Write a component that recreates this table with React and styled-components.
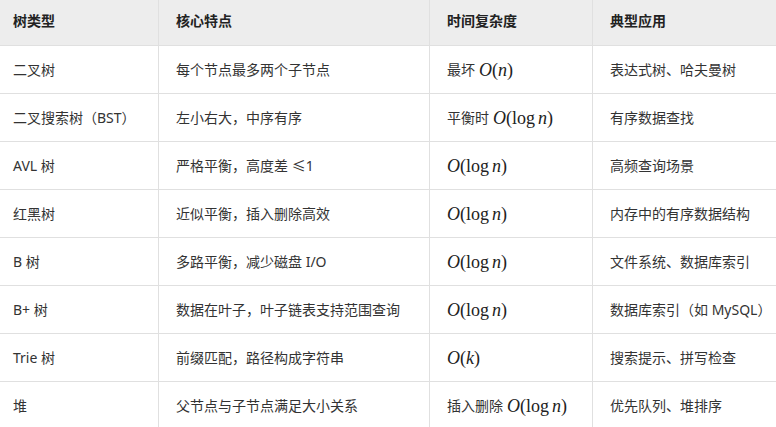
import React from "react";
import styled, { createGlobalStyle } from "styled-components";

const Global = createGlobalStyle`
  html, body { margin: 0; padding: 0; background: #fff; }
  body {
    font-family: "Noto Sans", "Noto Sans CJK SC", sans-serif;
    color: #333;
    overflow: hidden;
  }
`;

const Table = styled.div`
  width: 776px;
  display: flex;
  flex-direction: column;
  font-size: 14px;
`;

const Row = styled.div`
  display: grid;
  grid-template-columns: 159px 271px 163px 1fr;
  height: ${(p) => (p.$head ? "46px" : "48px")};
  box-sizing: border-box;
  border-bottom: 1px solid #e0e0e0;
  background: ${(p) => (p.$head ? "#ededed" : "#fff")};
  font-weight: ${(p) => (p.$head ? 700 : 400)};
  color: ${(p) => (p.$head ? "#222" : "#333")};
`;

const Cell = styled.div`
  display: flex;
  align-items: center;
  box-sizing: border-box;
  padding: 0 0 ${(p) => (p.$head ? "3px" : "0")} ${(p) => (p.$first ? "13px" : "17px")};
  border-right: ${(p) => (p.$last ? "none" : "1px solid #e0e0e0")};
  white-space: nowrap;
  line-height: 20px;
`;

const Math = styled.span`
  font-family: "Liberation Serif", "DejaVu Serif", serif;
  font-size: 18px;
  color: #222;
  margin-left: ${(p) => (p.$lead ? "4px" : "0")};
`;

const It = styled.i`
  font-style: italic;
`;

const Thin = styled.span`
  display: inline-block;
  width: 3px;
`;

function O({ arg, lead }) {
  return (
    <Math $lead={lead}>
      <It>O</It>(
      {arg === "log" ? (
        <>
          log<Thin />
          <It>n</It>
        </>
      ) : (
        <It>{arg}</It>
      )}
      )
    </Math>
  );
}

const rows = [
  ["二叉树", "每个节点最多两个子节点", <>最坏<O arg="n" lead /></>, "表达式树、哈夫曼树"],
  ["二叉搜索树（BST）", "左小右大，中序有序", <>平衡时<O arg="log" lead /></>, "有序数据查找"],
  ["AVL 树", "严格平衡，高度差 ≤1", <O arg="log" />, "高频查询场景"],
  ["红黑树", "近似平衡，插入删除高效", <O arg="log" />, "内存中的有序数据结构"],
  ["B 树", "多路平衡，减少磁盘 I/O", <O arg="log" />, "文件系统、数据库索引"],
  ["B+ 树", "数据在叶子，叶子链表支持范围查询", <O arg="log" />, "数据库索引（如 MySQL）"],
  ["Trie 树", "前缀匹配，路径构成字符串", <O arg="k" />, "搜索提示、拼写检查"],
  ["堆", "父节点与子节点满足大小关系", <>插入删除<O arg="log" lead /></>, "优先队列、堆排序"],
];

export default function App() {
  const head = ["树类型", "核心特点", "时间复杂度", "典型应用"];
  return (
    <>
      <Global />
      <Table>
        <Row $head>
          {head.map((h, i) => (
            <Cell key={i} $head $first={i === 0} $last={i === 3}>
              {h}
            </Cell>
          ))}
        </Row>
        {rows.map((r, ri) => (
          <Row key={ri}>
            {r.map((c, i) => (
              <Cell key={i} $first={i === 0} $last={i === 3}>
                {c}
              </Cell>
            ))}
          </Row>
        ))}
      </Table>
    </>
  );
}
